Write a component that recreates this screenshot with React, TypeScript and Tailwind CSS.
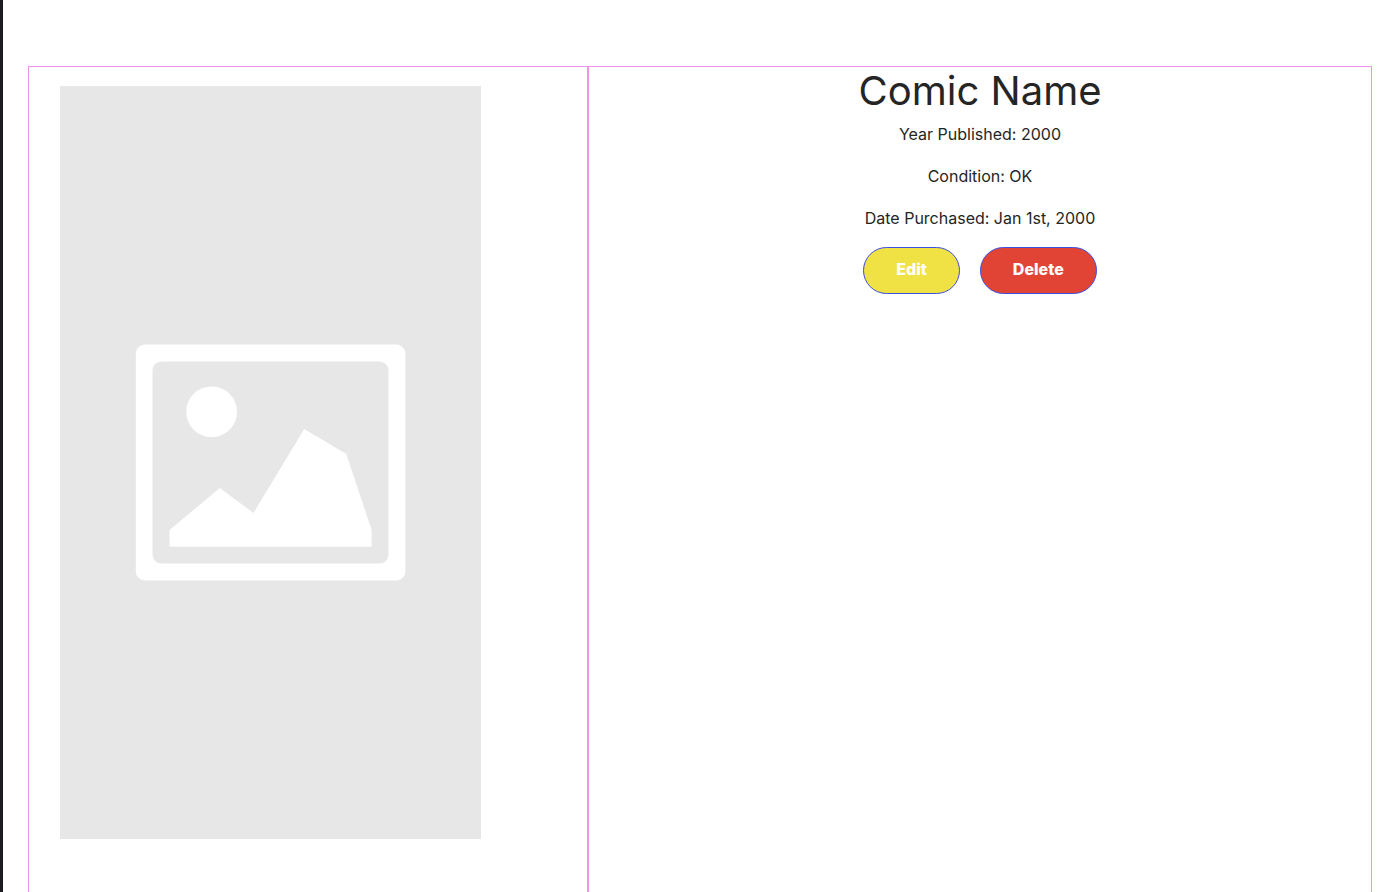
function ComicCover() {
  return (
    <svg viewBox="0 0 421 753" role="img" aria-label="Comic cover placeholder" className="block h-auto w-full">
      <rect width="421" height="753" fill="#e7e7e7" />
      <rect x="75.8" y="258.5" width="269.6" height="236" rx="9" fill="#fff" />
      <rect x="92.5" y="275.4" width="236" height="202.2" rx="9" fill="#e7e7e7" />
      <circle cx="151.6" cy="325.8" r="25.4" fill="#fff" />
      <path d="M109.5 444L159.8 402L193.5 427L244.2 343L286.3 368L311.6 444V460.8H109.5Z" fill="#fff" />
    </svg>
  );
}

const details = [
  { label: "Year Published", value: "2000" },
  { label: "Condition", value: "OK" },
  { label: "Date Purchased", value: "Jan 1st, 2000" },
];

const buttonClass =
  "h-[47px] rounded-full border border-[#3b4fe0] px-8 pb-1 text-base font-extrabold text-white";

export default function App() {
  return (
    <div className="min-h-screen border-l-3 border-[#1b1c20] bg-white pt-[66px] pr-6 pl-[25px] font-['Inter',sans-serif] text-[#252525]">
      <main className="grid min-h-[calc(100vh-56px)] grid-cols-12">
        <section className="col-span-5 border border-[#ee94e7] pt-[19px] pr-[106px] pl-[31px]">
          <ComicCover />
        </section>
        <section className="col-span-7 border border-[#ee94e7] text-center">
          <h1 className="text-[40px] leading-[47px]">Comic Name</h1>
          <div className="mt-2 flex flex-col gap-[18px]">
            {details.map(({ label, value }) => (
              <p key={label} className="text-base">
                {label}: {value}
              </p>
            ))}
          </div>
          <div className="mt-[17px] flex justify-center gap-5">
            <button type="button" className={`${buttonClass} bg-[#f0e244]`}>
              Edit
            </button>
            <button type="button" className={`${buttonClass} bg-[#e14334]`}>
              Delete
            </button>
          </div>
        </section>
      </main>
    </div>
  );
}
